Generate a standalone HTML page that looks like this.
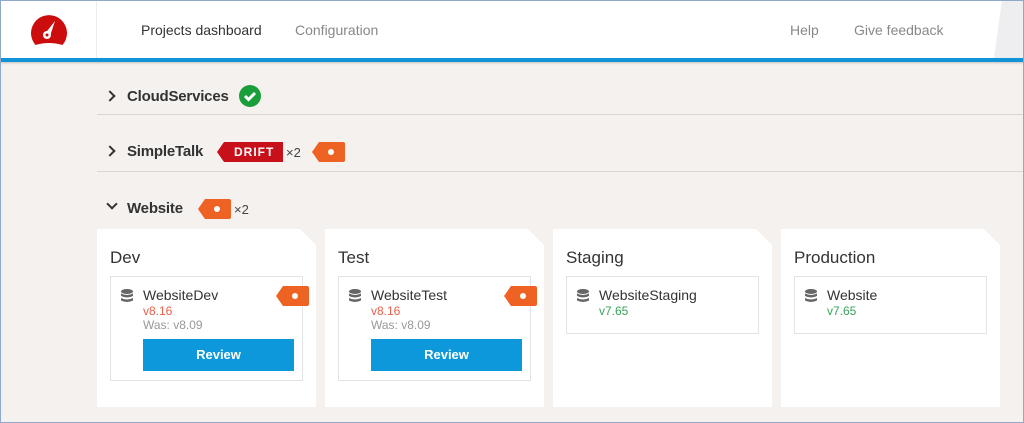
<!DOCTYPE html>
<html><head><meta charset="utf-8"><style>
*{margin:0;padding:0;box-sizing:border-box}
body{width:1024px;height:423px;overflow:hidden;background:#f4f1ef;font-family:"Liberation Sans",sans-serif;position:relative;color:#333}
.frame{position:absolute;left:0;top:0;width:1024px;height:423px;border:1px solid #8fa9cc;pointer-events:none;z-index:10}
.hdr{position:absolute;left:0;top:0;width:1024px;height:58px;background:#fff}
.hdr .div{position:absolute;left:96px;top:0;width:1px;height:58px;background:#ececec}
.hdr .gray{position:absolute;right:0;top:0;width:30px;height:58px;background:#eeedf0;clip-path:polygon(8px 0,100% 0,100% 100%,0 100%)}
.bar{position:absolute;left:0;top:58px;width:1024px;height:4px;background:#1193d8;box-shadow:0 1px 2px rgba(0,0,0,.2)}
.nav{position:absolute;top:22px;font-size:14px}
.row{position:absolute;left:97px;width:927px;border-bottom:1px solid #d9d6d4}
.t{position:absolute;font-size:15px;font-weight:bold;color:#333;letter-spacing:-0.2px}
.chev{position:absolute;width:8px;height:8px;border-right:2px solid #333;border-bottom:2px solid #333}
.tag{position:absolute;height:20px;width:33px;background:#ee6224;clip-path:polygon(7px 0,100% 0,100% 100%,7px 100%,0 50%);border-radius:2px}
.tag:after{content:"";position:absolute;left:16px;top:7px;width:6px;height:6px;border-radius:50%;background:#fff}
.x2{position:absolute;font-size:13px;color:#444}
.card{position:absolute;top:229px;width:219px;height:178px;background:#fff;clip-path:polygon(0 0,203px 0,219px 16px,219px 100%,0 100%)}
.card h3{position:absolute;left:13px;top:19px;font-size:17px;font-weight:normal;color:#333}
.box{position:absolute;left:13px;top:47px;width:193px;border:1px solid #e3e3e3;background:#fff}
.db{position:absolute;left:10px;top:12px;width:12px;height:14px}
.nm{position:absolute;left:32px;top:10px;font-size:14px;color:#333}
.v{position:absolute;left:32px;top:27px;font-size:12px}
.was{position:absolute;left:32px;top:41px;font-size:12px;color:#999}
.btn{position:absolute;left:32px;top:62px;width:151px;height:32px;background:#0d98dc;color:#fff;font-weight:bold;font-size:13px;text-align:center;line-height:32px}
</style></head><body>
<div class="hdr">
<svg style="position:absolute;left:30px;top:13px" width="38" height="34" viewBox="0 0 38 34"><path d="M5.5 32 A18 18 0 1 1 32.5 32 Q19 28 5.5 32Z" fill="#cc0d0d"/><path d="M15.5 20 L25 8 L20 23Z" fill="#fff"/><circle cx="17" cy="22" r="4" fill="#fff"/><circle cx="17" cy="22" r="1.5" fill="#cc0d0d"/></svg>
<div class="div"></div>
<div class="nav" style="left:141px;color:#333">Projects dashboard</div>
<div class="nav" style="left:295px;color:#888">Configuration</div>
<div class="nav" style="left:790px;color:#888">Help</div>
<div class="nav" style="left:854px;color:#888">Give feedback</div>
<div class="gray"></div>
</div>
<div class="bar"></div>

<div class="row" style="top:62px;height:53px"></div>
<div class="chev" style="left:106px;top:92px;transform:rotate(-45deg)"></div>
<div class="t" style="left:127px;top:88px">CloudServices</div>
<svg style="position:absolute;left:239px;top:85px" width="22" height="22"><circle cx="11" cy="11" r="11" fill="#1a9e3a"/><path d="M6 11 L9.5 14.5 L16 8" stroke="#fff" stroke-width="3" fill="none"/></svg>

<div class="row" style="top:115px;height:57px"></div>
<div class="chev" style="left:106px;top:147px;transform:rotate(-45deg)"></div>
<div class="t" style="left:127px;top:143px">SimpleTalk</div>
<div style="position:absolute;left:217px;top:142px;width:66px;height:20px;background:#c8101b;clip-path:polygon(7px 0,100% 0,100% 100%,7px 100%,0 50%);color:#fff;font-size:12px;font-weight:bold;letter-spacing:1px;line-height:20px;padding-left:17px">DRIFT</div>
<div class="x2" style="left:286px;top:145px">×2</div>
<div class="tag" style="left:312px;top:142px"></div>

<div class="chev" style="left:108px;top:200px;transform:rotate(45deg)"></div>
<div class="t" style="left:127px;top:200px">Website</div>
<div class="tag" style="left:198px;top:199px"></div>
<div class="x2" style="left:234px;top:202px">×2</div>

<div class="card" style="left:97px"><h3>Dev</h3>
<div class="box" style="height:105px"><svg class="db" viewBox="0 0 12 14"><ellipse cx="6" cy="2.5" rx="6" ry="2.5" fill="#666"/><path d="M0 4.5 Q6 7.5 12 4.5 V7 Q6 10 0 7Z M0 9 Q6 12 12 9 V11.5 Q6 14.5 0 11.5Z" fill="#666"/></svg>
<div class="nm">WebsiteDev</div><div class="v" style="color:#e8604a">v8.16</div><div class="was">Was: v8.09</div><div class="btn">Review</div></div>
<div class="tag" style="left:179px;top:57px"></div></div>

<div class="card" style="left:325px"><h3>Test</h3>
<div class="box" style="height:105px"><svg class="db" viewBox="0 0 12 14"><ellipse cx="6" cy="2.5" rx="6" ry="2.5" fill="#666"/><path d="M0 4.5 Q6 7.5 12 4.5 V7 Q6 10 0 7Z M0 9 Q6 12 12 9 V11.5 Q6 14.5 0 11.5Z" fill="#666"/></svg>
<div class="nm">WebsiteTest</div><div class="v" style="color:#e8604a">v8.16</div><div class="was">Was: v8.09</div><div class="btn">Review</div></div>
<div class="tag" style="left:179px;top:57px"></div></div>

<div class="card" style="left:553px"><h3>Staging</h3>
<div class="box" style="height:58px"><svg class="db" viewBox="0 0 12 14"><ellipse cx="6" cy="2.5" rx="6" ry="2.5" fill="#666"/><path d="M0 4.5 Q6 7.5 12 4.5 V7 Q6 10 0 7Z M0 9 Q6 12 12 9 V11.5 Q6 14.5 0 11.5Z" fill="#666"/></svg>
<div class="nm">WebsiteStaging</div><div class="v" style="color:#3aa35a">v7.65</div></div></div>

<div class="card" style="left:781px"><h3>Production</h3>
<div class="box" style="height:58px"><svg class="db" viewBox="0 0 12 14"><ellipse cx="6" cy="2.5" rx="6" ry="2.5" fill="#666"/><path d="M0 4.5 Q6 7.5 12 4.5 V7 Q6 10 0 7Z M0 9 Q6 12 12 9 V11.5 Q6 14.5 0 11.5Z" fill="#666"/></svg>
<div class="nm">Website</div><div class="v" style="color:#3aa35a">v7.65</div></div></div>

<div class="frame"></div>
</body></html>
